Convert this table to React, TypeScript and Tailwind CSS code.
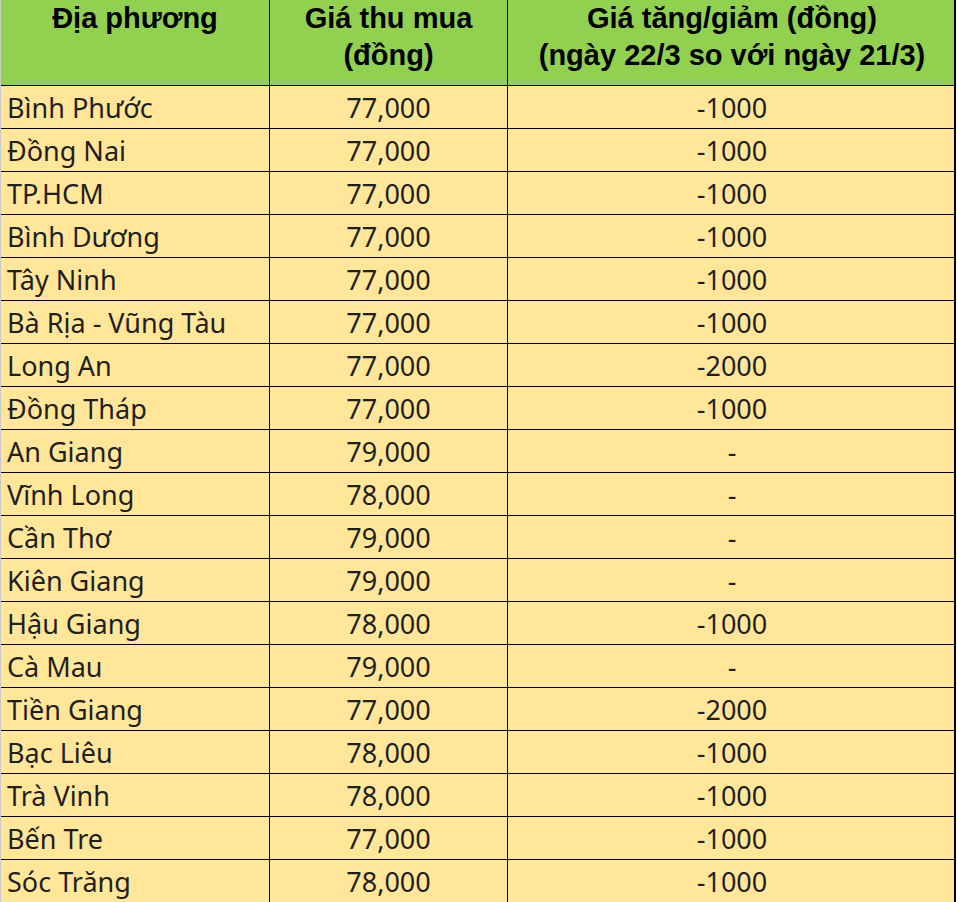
import React from "react";

const rows: [string, string, string][] = [
  ["Bình Phước", "77,000", "-1000"],
  ["Đồng Nai", "77,000", "-1000"],
  ["TP.HCM", "77,000", "-1000"],
  ["Bình Dương", "77,000", "-1000"],
  ["Tây Ninh", "77,000", "-1000"],
  ["Bà Rịa - Vũng Tàu", "77,000", "-1000"],
  ["Long An", "77,000", "-2000"],
  ["Đồng Tháp", "77,000", "-1000"],
  ["An Giang", "79,000", "-"],
  ["Vĩnh Long", "78,000", "-"],
  ["Cần Thơ", "79,000", "-"],
  ["Kiên Giang", "79,000", "-"],
  ["Hậu Giang", "78,000", "-1000"],
  ["Cà Mau", "79,000", "-"],
  ["Tiền Giang", "77,000", "-2000"],
  ["Bạc Liêu", "78,000", "-1000"],
  ["Trà Vinh", "78,000", "-1000"],
  ["Bến Tre", "77,000", "-1000"],
  ["Sóc Trăng", "78,000", "-1000"],
];

export default function App() {
  return (
    <div className="w-[958px] h-[902px] overflow-hidden bg-white">
      <div className="w-[956px] border-l border-l-[#c8c8c8]">
        <div className="grid grid-cols-[269px_238px_448px] bg-[#92d050] border-r-2 border-r-black border-b border-b-black h-[86px] font-['Liberation_Sans',Arial,sans-serif] font-bold text-[29px] leading-[37px] text-black">
          <div className="text-center border-r border-r-black">Địa phương</div>
          <div className="text-center border-r border-r-black">
            Giá thu mua
            <br />
            (đồng)
          </div>
          <div className="text-center whitespace-nowrap">
            Giá tăng/giảm (đồng)
            <br />
            (ngày 22/3 so với ngày 21/3)
          </div>
        </div>
        {rows.map((r, i) => (
          <div
            key={i}
            className="grid grid-cols-[269px_238px_448px] bg-[#ffe699] border-r-2 border-r-black border-b border-b-black h-[43px] overflow-hidden font-['Noto_Sans','Open_Sans',sans-serif] text-[27px] leading-[44px] text-[#1f1f1f]"
          >
            <div className="pl-[6px] border-r border-r-black whitespace-nowrap">{r[0]}</div>
            <div className="text-center border-r border-r-black">{r[1]}</div>
            <div className="text-center">{r[2]}</div>
          </div>
        ))}
      </div>
    </div>
  );
}
